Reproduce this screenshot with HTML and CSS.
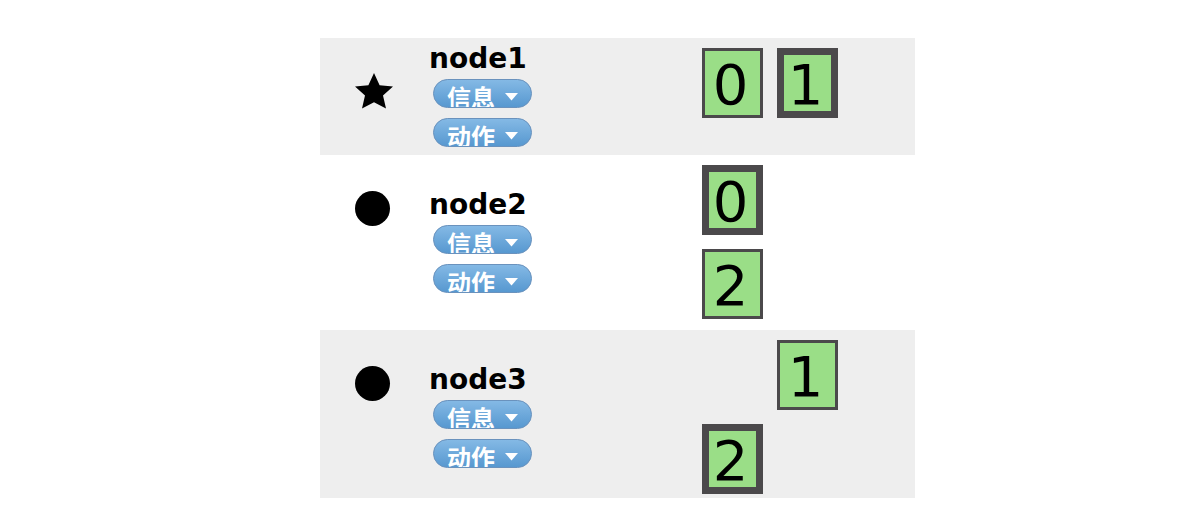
FILE: index.html
```html
<!DOCTYPE html>
<html lang="zh-CN">
<head>
<meta charset="utf-8">
<title>node</title>
<link rel="stylesheet" href="styles.css">
</head>
<body>
<table class="nodes">
  <colgroup><col class="col-role"><col class="col-name"><col></colgroup>
  <tbody>
    <tr class="node">
      <td class="role"><svg class="role-icon" viewBox="0 0 38 36"><path d="M19 0l5.600 12.200L38 13.600 28 22.600 31 35.500 19 29.200 7 35.500 10 22.600 0 13.600l13.400-1.400z"/></svg></td>
      <th class="info" scope="row">
        <div class="name">node1</div>
        <button class="pill" type="button">信息<svg class="caret" viewBox="0 0 13 8"><path d="M0 0h13L6.500 7.500z"/></svg></button>
        <button class="pill" type="button">动作<svg class="caret" viewBox="0 0 13 8"><path d="M0 0h13L6.500 7.500z"/></svg></button>
      </th>
      <td class="shards"><div class="shard-grid"><span class="shard">0</span><span class="shard primary">1</span></div></td>
    </tr>
    <tr class="node">
      <td class="role"><svg class="role-icon" viewBox="0 0 38 36"><circle cx="17.500" cy="18.500" r="17.500"/></svg></td>
      <th class="info" scope="row">
        <div class="name">node2</div>
        <button class="pill" type="button">信息<svg class="caret" viewBox="0 0 13 8"><path d="M0 0h13L6.500 7.500z"/></svg></button>
        <button class="pill" type="button">动作<svg class="caret" viewBox="0 0 13 8"><path d="M0 0h13L6.500 7.500z"/></svg></button>
      </th>
      <td class="shards"><div class="shard-grid"><span class="shard primary">0</span><span class="shard first">2</span></div></td>
    </tr>
    <tr class="node last">
      <td class="role"><svg class="role-icon" viewBox="0 0 38 36"><circle cx="17.500" cy="18.500" r="17.500"/></svg></td>
      <th class="info" scope="row">
        <div class="name">node3</div>
        <button class="pill" type="button">信息<svg class="caret" viewBox="0 0 13 8"><path d="M0 0h13L6.500 7.500z"/></svg></button>
        <button class="pill" type="button">动作<svg class="caret" viewBox="0 0 13 8"><path d="M0 0h13L6.500 7.500z"/></svg></button>
      </th>
      <td class="shards"><div class="shard-grid"><span class="shard second">1</span><span class="shard primary first">2</span></div></td>
    </tr>
  </tbody>
</table>
</body>
</html>
```
FILE: styles.css
```css
body {
  margin: 0;
  padding: 38px 288px 18px 320px;
  background: #fff;
  color: #000;
  font-family: "DejaVu Sans", "Noto Sans CJK SC", sans-serif;
}
.nodes {
  width: 100%;
  table-layout: fixed;
  border-collapse: collapse;
}
.col-role { width: 109px; }
.col-name { width: 273px; }
.node:nth-child(odd) { background: #eee; }
.role {
  padding: 35px 0 0 35px;
  vertical-align: top;
}
.role-icon {
  display: block;
  width: 38px;
  height: 36px;
}
.info {
  padding: 4px 0 8px;
  vertical-align: middle;
  text-align: left;
}
.last .info { padding-top: 11px; }
.name {
  height: 37px;
  font-size: 28px;
  line-height: 34px;
}
.pill {
  display: flex;
  align-items: flex-start;
  box-sizing: border-box;
  width: 99px;
  height: 29px;
  margin: 0 0 10px 4px;
  padding: 0 13px;
  overflow: hidden;
  border: 1px solid #6a92bd;
  border-radius: 15px;
  background: linear-gradient(#84b9e5, #5798d0);
  color: #fff;
  font: bold 24px/33px "Noto Sans CJK SC", sans-serif;
}
.pill:last-child { margin-bottom: 0; }
.caret {
  width: 13px;
  height: 8px;
  margin: 13px 0 0 auto;
  fill: #fff;
}
.shards {
  padding: 10px 0 11px;
  vertical-align: top;
}
.last .shards { padding-bottom: 4px; }
.shard-grid {
  display: grid;
  grid-template-columns: 61px 61px;
  gap: 14px;
}
.shard {
  display: flex;
  align-items: center;
  justify-content: center;
  box-sizing: border-box;
  height: 70px;
  padding: 3px 4px 0 0;
  border: 3px solid #4b494b;
  background: #9ade87;
  font-size: 56px;
  line-height: 56px;
}
.primary { border-width: 7px; }
.first { grid-column: 1; }
.second { grid-column: 2; }
```
